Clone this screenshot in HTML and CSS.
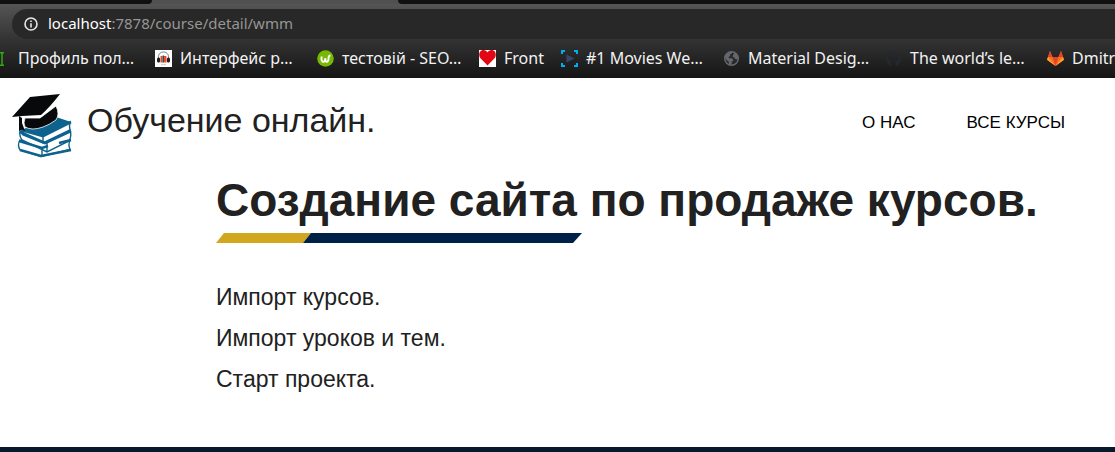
FILE: index.html
```html
<!DOCTYPE html>
<html lang="ru">
<head>
<meta charset="utf-8">
<title>Обучение онлайн.</title>
<link rel="stylesheet" href="styles.css">
</head>
<body>
<div class="browser">
  <div class="tabs"><div class="tab-prev"></div><div class="tab-active"></div><div class="tab-rest"></div></div>
  <div class="toolbar">
    <div class="address">
      <svg class="info" viewBox="0 0 14 14" aria-hidden="true"><circle cx="7" cy="7" r="6" fill="none" stroke="#e6e6e6" stroke-width="1.6"/><path d="M7 6.2v4.2M7 3.4v1.6" stroke="#e6e6e6" stroke-width="1.6"/></svg>
      <span class="url"><span class="host">localhost</span>:7878/course/detail/wmm</span>
    </div>
    <nav class="bookmarks" aria-label="Закладки">
      <a class="bookmark" href="#"><svg class="favicon" viewBox="0 0 17 17"><path d="M7 2.7h4M7 15.3h4M9 2.7v12.6" stroke="#36a80e" stroke-width="1.5" fill="none"/></svg><span class="label">Профиль пол…</span></a>
      <a class="bookmark" href="#"><svg class="favicon" viewBox="0 0 17 17"><path fill="#fff" d="M0 0h17v17H0z"/><path d="M3.500 8C3 4.200 5.500 2 8.500 2S14 4.200 13.500 8" fill="none" stroke="#777" stroke-width="1"/><rect x="2" y="7.500" width="3.200" height="5" rx="1.500" fill="#222"/><rect x="11.800" y="7.500" width="3.200" height="5" rx="1.500" fill="#222"/><path d="M5.500 6h2v6.500h-2z" fill="#c9583f"/><path d="M7.500 5.500h1.500v7H7.500z" fill="#444"/><path d="M9 6h2.500v6.500H9z" fill="#f04a20"/><path d="M6 14.700h5" stroke="#ccc"/></svg><span class="label">Интерфейс р…</span></a>
      <a class="bookmark" href="#"><svg class="favicon" viewBox="0 0 17 17"><circle cx="8.500" cy="8.500" r="8.300" fill="#76b900"/><path d="M4.600 6.500c-.3 3 0 5.400 1.700 5.400 1.600 0 1.900-2.300 2.100-3.700-.1 2.200.2 3.700 1.500 3.700 1.700 0 1.600-2.700 1.700-4.500.2-1.500.8-1.900 1.900-1.900" fill="none" stroke="#fff" stroke-width="1.900"/></svg><span class="label">тестовій - SEO…</span></a>
      <a class="bookmark" href="#"><svg class="favicon" viewBox="0 0 17 17"><path fill="#fff" d="M0 0h17v17H0z"/><path d="M8.500 15.500 1.200 8C-.5 5.500 0 2 2.500.500 5-.5 7.500.500 8.500 2.500 9.500.500 12-.5 14.500.500 17 2 17.500 5.500 15.800 8z" fill="#e30613"/></svg><span class="label">Front</span></a>
      <a class="bookmark" href="#"><svg class="favicon" viewBox="0 0 17 17"><path d="M1 4V1h3M13 1h3v3M16 13v3h-3M4 16H1v-3" fill="none" stroke="#00aeef" stroke-width="2"/><path d="M5.500 4.500v8l8-4z" fill="#34486d"/></svg><span class="label">#1 Movies We…</span></a>
      <a class="bookmark" href="#"><svg class="favicon" viewBox="0 0 17 17"><circle cx="8.500" cy="8.500" r="6.800" fill="#292929" stroke="#64686d" stroke-width="1.500"/><path d="M2 7.500C2 4 5 1.600 9.500 1.700L9 3.200 7 4.500 7.300 6 5.500 7 6 8.300h3.200l1.300 2.200-1.500 1-.7 3.500L6 14.500V12L3.500 10zM10 5l1.500-2.500c2 .8 3.500 2.800 3.700 5.500L14 9.500l-2-.500-.5-1.500-1.800-.5z" fill="#64686d"/></svg><span class="label">Material Desig…</span></a>
      <a class="bookmark" href="#"><svg class="favicon" viewBox="0 0 17 17"><path d="M6.300 15.800C3 15 1 12 1 8.500a7.500 7.500 0 0 1 15 0c0 3.500-2 6.500-5.300 7.300v-2.900c0-.8-.3-1.300-.7-1.600 2.400-.3 3.700-1.500 3.700-3.800 0-1-.3-1.700-.8-2.300.2-.6.200-1.300-.1-2-.8 0-1.500.3-2.200.8a7 7 0 0 0-4 0c-.8-.5-1.500-.8-2.300-.8-.3.700-.3 1.400-.1 2-.5.600-.8 1.300-.8 2.300 0 2.300 1.400 3.500 3.700 3.800-.4.300-.6.700-.7 1.300-1 .4-1.600 0-2.200-1 .4 1.500 1.200 2 2.100 2z" fill="#24292f"/></svg><span class="label">The world’s le…</span></a>
      <a class="bookmark" href="#"><svg class="favicon" viewBox="0 0 17 17"><path d="M8.500 16 0 9.800 3 1l2.500 6h6L14 1l3 8.800z" fill="#fc6d26"/><path d="M3 1 1 7h4.500zM14 1l2 6h-4.500zM5.500 7h6l-3 9z" fill="#e24329"/><path d="M1 7 0 9.800 8.500 16zM16 7l1 2.800L8.500 16z" fill="#fca326"/></svg><span class="label">Dmitry</span></a>
    </nav>
  </div>
</div>
<header class="site-header">
  <a class="brand" href="#">
    <svg class="logo" viewBox="0 0 60 64" aria-hidden="true">
      <g fill="#fff" stroke="#0d628e" stroke-width="1.400">
        <path d="M8 46Q5 51 8 56L29 62.500 58 55.500Q56 51 58 46L30 53z"/>
        <path d="M8 37Q7 42 10 46L35 58 57 47Q60 42 58 36L34 49z"/>
        <path d="M10 36Q9 39 11 41L31 49 58 36Q57 32 58 28L31 41z"/>
      </g>
      <path d="M9 36 31 42 59 28 44 23z" fill="#0d628e"/>
      <path d="M9 36 31 42 59 28M8 38 33 49 59 37M7 47 30 54 36 52M47 49 59 46M8 56 29 62 59 56" fill="none" stroke="#0d628e" stroke-width="2.600"/>
      <path d="M31 41V48M35 49V58M30 53V62" fill="none" stroke="#0d628e" stroke-width="1.400"/>
      <path d="M13 24 28 24 44 12Q48 20 44 26 37 31 31 33 20 37 13 33 11 29 13 24z" fill="#08090b" stroke="#fff" stroke-width=".8"/>
      <path d="M0 23 18 3 48 0Q38 13 29 21L10 22z" fill="#08090b"/>
      <path d="M9 23.500 29 22.500 43 10" fill="none" stroke="#fff" stroke-width="1.200"/>
      <path d="M7 22 10 24 10 29 13 37 10 35.500 7 37 7 30z" fill="#08090b"/>
    </svg>
    <span>Обучение онлайн.</span>
  </a>
  <nav class="menu"><a href="#">О НАС</a><a href="#">ВСЕ КУРСЫ</a></nav>
</header>
<main class="course">
  <h1>Создание сайта по продаже курсов.</h1>
  <svg class="divider" viewBox="0 0 366 10" aria-hidden="true"><path d="M8 0H95L87 10H0z" fill="#d2a61e"/><path d="M95 0H366L357 10H87z" fill="#002147"/></svg>
  <ul class="topics"><li>Импорт курсов.</li><li>Импорт уроков и тем.</li><li>Старт проекта.</li></ul>
</main>
<footer class="site-footer"></footer>
</body>
</html>
```

FILE: styles.css
```css
* { box-sizing: border-box; }
body {
  margin: 0;
  min-height: 100vh;
  display: flex;
  flex-direction: column;
  background: #fff;
  color: #212121;
  font-family: "Liberation Sans", Arial, sans-serif;
}
a { color: inherit; text-decoration: none; }
.browser { overflow: hidden; font-family: "Noto Sans", sans-serif; }
.tabs { display: flex; height: 4px; background: #505050; }
.tab-prev { width: 152px; background: #101010; border-bottom-right-radius: 4px; }
.tab-active { width: 246px; }
.tab-rest { flex: 1; background: #101010; border-bottom-left-radius: 4px; }
.toolbar {
  height: 74px;
  padding: 5px 0 0 12px;
  background: linear-gradient(#555, #333 48%, #151515);
}
.address {
  display: flex;
  align-items: center;
  gap: 10px;
  height: 30px;
  padding-left: 12px;
  border-radius: 15px 0 0 15px;
  background: #282828;
  color: #969696;
  font-size: 15px;
}
.info { width: 14px; height: 14px; }
.url { padding-bottom: 2px; }
.host { color: #fff; }
.bookmarks {
  display: flex;
  gap: 17px;
  height: 39px;
  margin-left: -19px;
  align-items: center;
  color: #f2f2f2;
  font-size: 16px;
}
.bookmark { display: flex; flex: none; align-items: center; gap: 8px; }
.favicon { width: 17px; height: 17px; }
.label { min-width: 40px; padding-bottom: 2px; white-space: nowrap; }
.bookmark:not(:nth-child(4)) .label { width: 120px; }
.site-header {
  display: flex;
  align-items: center;
  justify-content: space-between;
  padding: 16px 50px 12px 12px;
}
.brand { display: flex; align-items: center; gap: 15px; font-size: 34px; line-height: 52px; }
.brand span { padding-bottom: 12px; }
.logo { width: 60px; height: 64px; }
.menu { display: flex; gap: 51px; padding-bottom: 6px; color: #000; font-size: 17px; }
.course { flex: 1; padding: 0 16px 46px 216px; }
h1 { margin: 0; font-size: 46px; line-height: 60px; white-space: nowrap; }
.divider { display: block; width: 366px; height: 10px; margin-top: 3px; }
.topics { margin: 34px 0 0; padding: 0; list-style: none; font-size: 23px; line-height: 41px; }
.site-footer { height: 5px; background: #071a2d; }
```
